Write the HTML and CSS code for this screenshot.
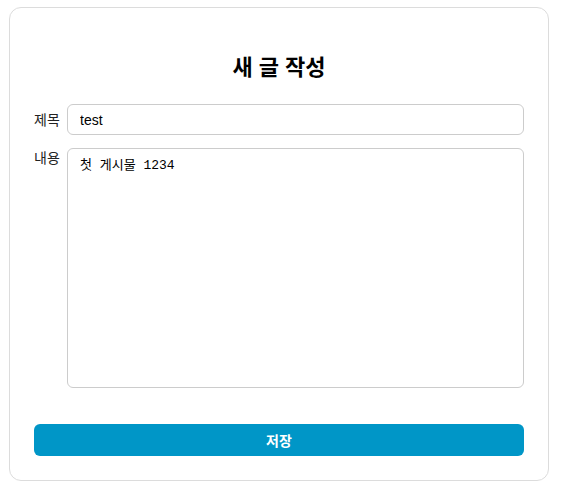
FILE: index.html
```html
<!DOCTYPE html>
<html lang="ko">
<head>
<meta charset="utf-8">
<link rel="stylesheet" href="styles.css">
</head>
<body>
<div class="card">
  <h2 class="title">새 글 작성</h2>
  <div class="row">
    <label class="label">제목</label>
    <input class="input" type="text" value="test">
  </div>
  <div class="row">
    <label class="label">내용</label>
    <textarea class="textarea">첫 게시물 1234</textarea>
  </div>
  <button class="btn">저장</button>
</div>
</body>
</html>
```
FILE: styles.css
```css
html, body { margin: 0; padding: 0; background: #fff; }
body {
  font-family: "Liberation Sans", Arial, "Noto Sans CJK KR", sans-serif;
  padding: 7px 19px 0 9px;
}
.card {
  width: 540px;
  height: 474px;
  border: 1px solid #dcdcdc;
  border-radius: 12px;
  padding: 0 24px;
  box-sizing: border-box;
  display: flex;
  flex-direction: column;
}
.title {
  margin: 45px 0 21px;
  text-align: center;
  font-size: 22px;
  font-weight: bold;
  line-height: 30px;
  color: #000;
}
.row {
  display: flex;
  align-items: flex-start;
  margin-bottom: 13px;
}
.label {
  width: 33px;
  flex: none;
  font-size: 14px;
  color: #222;
  line-height: 20px;
}
.row:first-of-type .label { margin-top: 6px; }
.row:nth-of-type(2) .label { margin-top: 0; }
.input {
  flex: 1;
  height: 31px;
  box-sizing: border-box;
  border: 1px solid #ccc;
  border-radius: 6px;
  padding: 0 12px;
  font-family: "Liberation Sans", Arial, sans-serif;
  font-size: 14px;
  color: #000;
  outline: none;
}
.textarea {
  flex: 1;
  height: 240px;
  box-sizing: border-box;
  border: 1px solid #ccc;
  border-radius: 6px;
  padding: 8px 12px;
  font-family: "Liberation Mono", "Noto Sans CJK KR", monospace;
  font-size: 13px;
  line-height: 18px;
  color: #000;
  resize: none;
  outline: none;
}
.btn {
  margin-top: 23px;
  height: 32px;
  border: none;
  border-radius: 6px;
  background: #0096c7;
  color: #fff;
  font-family: "Noto Sans CJK KR", sans-serif;
  font-size: 14px;
  font-weight: bold;
}
```
